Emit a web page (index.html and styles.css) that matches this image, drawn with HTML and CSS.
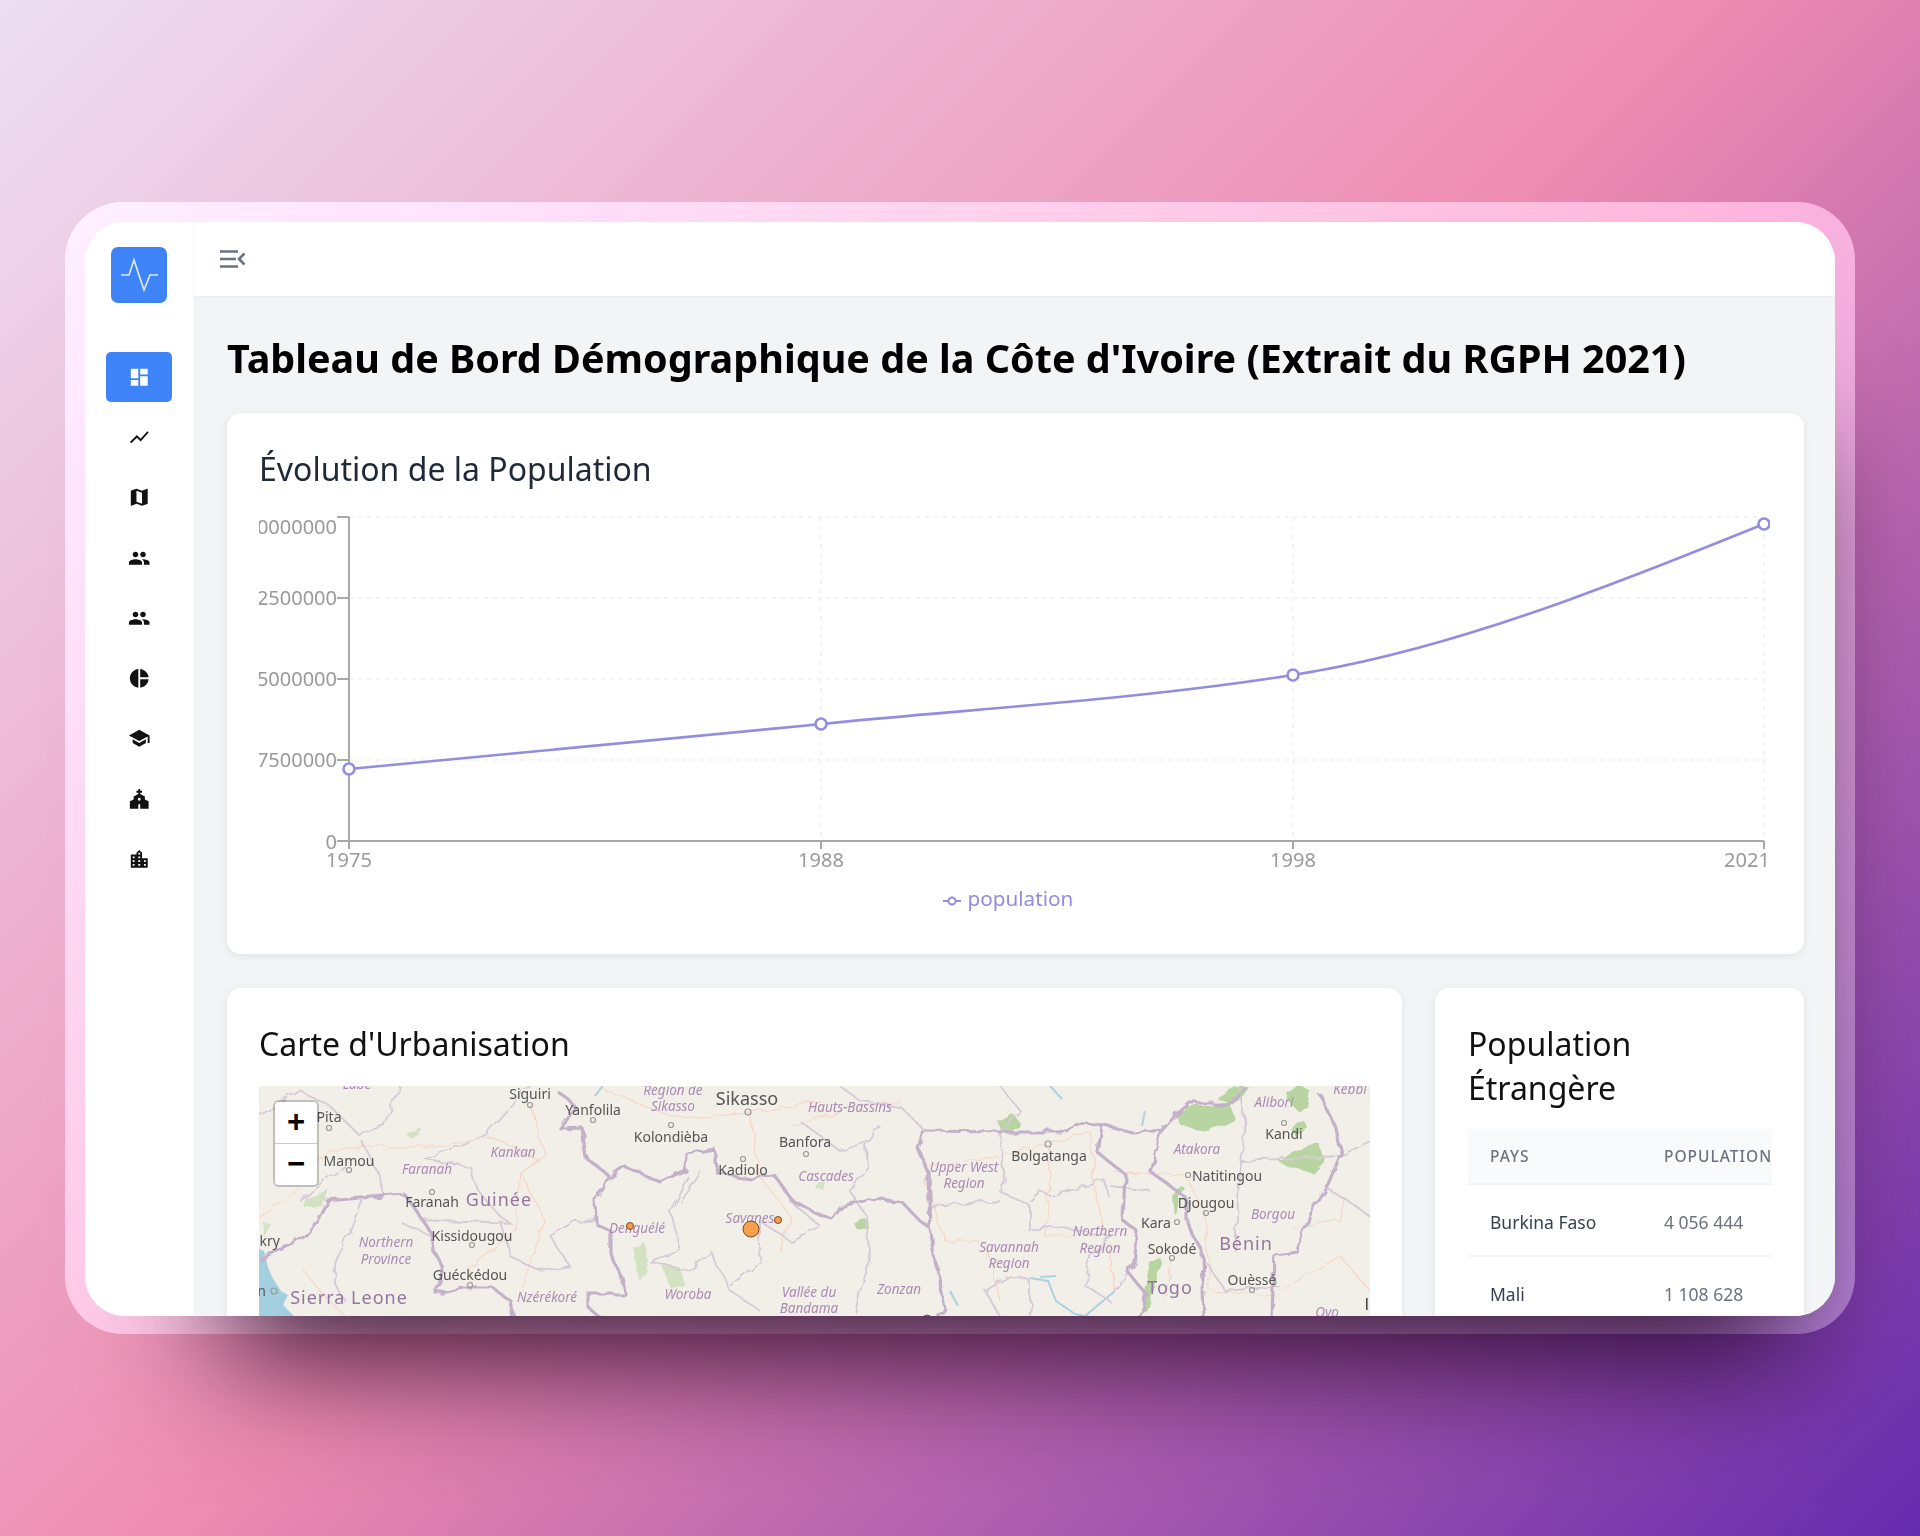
FILE: index.html
```html
<!DOCTYPE html>
<html lang="fr">
<head>
<meta charset="utf-8">
<title>Tableau de Bord Démographique</title>
<link rel="stylesheet" href="styles.css">
</head>
<body>
<div class="frame">
  <div class="app">
    <aside class="sidebar">
      <div class="logo">
        <svg class="logo-icon" viewBox="0 0 56 56"><path d="M10 28h8l5-15 10 30 6-15h8"/></svg>
      </div>
      <nav class="nav">
        <a class="nav-item active"><svg class="icon" viewBox="0 0 24 24"><path d="M3 13h8V3H3v10zm0 8h8v-6H3v6zm10 0h8V11h-8v10zm0-18v6h8V3h-8z"/></svg></a>
        <a class="nav-item"><svg class="icon" viewBox="0 0 24 24"><path d="M3.5 18.49l6-6.01 4 4L22 6.92l-1.41-1.41-7.09 7.97-4-4L2 16.99z"/></svg></a>
        <a class="nav-item"><svg class="icon" viewBox="0 0 24 24"><path d="M20.5 3l-.16.03L15 5.1 9 3 3.36 4.9c-.21.07-.36.25-.36.48V20.5c0 .28.22.5.5.5l.16-.03L9 18.9l6 2.1 5.64-1.9c.21-.07.36-.25.36-.48V3.5c0-.28-.22-.5-.5-.5zM15 19l-6-2.11V5l6 2.11V19z"/></svg></a>
        <a class="nav-item"><svg class="icon" viewBox="0 0 24 24"><path d="M16 11c1.66 0 2.99-1.34 2.99-3S17.66 5 16 5c-1.66 0-3 1.34-3 3s1.34 3 3 3zm-8 0c1.66 0 2.99-1.34 2.99-3S9.66 5 8 5C6.34 5 5 6.34 5 8s1.34 3 3 3zm0 2c-2.33 0-7 1.17-7 3.5V19h14v-2.5c0-2.33-4.67-3.5-7-3.5zm8 0c-.29 0-.62.02-.97.05 1.16.84 1.97 1.97 1.97 3.45V19h6v-2.5c0-2.33-4.67-3.5-7-3.5z"/></svg></a>
        <a class="nav-item"><svg class="icon" viewBox="0 0 24 24"><path d="M16 11c1.66 0 2.99-1.34 2.99-3S17.66 5 16 5c-1.66 0-3 1.34-3 3s1.34 3 3 3zm-8 0c1.66 0 2.99-1.34 2.99-3S9.66 5 8 5C6.34 5 5 6.34 5 8s1.34 3 3 3zm0 2c-2.33 0-7 1.17-7 3.5V19h14v-2.5c0-2.33-4.67-3.5-7-3.5zm8 0c-.29 0-.62.02-.97.05 1.16.84 1.97 1.97 1.97 3.45V19h6v-2.5c0-2.33-4.67-3.5-7-3.5z"/></svg></a>
        <a class="nav-item"><svg class="icon" viewBox="0 0 24 24"><path d="M11 2v20c-5.07-.5-9-4.79-9-10s3.93-9.5 9-10zm2.03 0v8.99H22c-.47-4.74-4.24-8.52-8.97-8.99zm0 11.01V22c4.74-.47 8.5-4.25 8.97-8.99h-8.97z"/></svg></a>
        <a class="nav-item"><svg class="icon" viewBox="0 0 24 24"><path d="M5 13.18v4L12 21l7-3.82v-4L12 17l-7-3.82zM12 3L1 9l11 6 9-4.91V17h2V9L12 3z"/></svg></a>
        <a class="nav-item"><svg class="icon" viewBox="0 0 24 24"><path d="M18 12.22V9l-5-2.5V5h2V3h-2V1h-2v2H9v2h2v1.5L6 9v3.22L2 14v8h9v-4c0-.55.45-1 1-1s1 .45 1 1v4h9v-8l-4-1.78zM12 13.5c-.83 0-1.5-.67-1.5-1.5s.67-1.5 1.5-1.5 1.5.67 1.5 1.5-.67 1.5-1.5 1.5z"/></svg></a>
        <a class="nav-item"><svg class="icon" viewBox="0 0 24 24"><path d="M15 11V5l-3-3-3 3v2H3v14h18V11h-6zm-8 8H5v-2h2v2zm0-4H5v-2h2v2zm0-4H5V9h2v2zm6 8h-2v-2h2v2zm0-4h-2v-2h2v2zm0-4h-2V9h2v2zm0-4h-2V5h2v2zm6 12h-2v-2h2v2zm0-4h-2v-2h2v2z"/></svg></a>
      </nav>
    </aside>
    <div class="main">
      <header class="topbar">
        <svg class="menu-icon" viewBox="0 0 25 18"><path d="M0 1.5h18M0 9h16M0 16.5h18M24.5 3.5L19 9l5.5 5.5"/></svg>
      </header>
      <main class="content">
        <h1 class="page-title">Tableau de Bord Démographique de la Côte d'Ivoire (Extrait du RGPH 2021)</h1>
        <section class="card">
          <h2 class="card-title slate">Évolution de la Population</h2>
          <svg class="chart" viewBox="259 504 1511 417">
            <g class="grid">
              <path d="M349 517H1764M349 598H1764M349 679H1764M349 760H1764M821 517V841M1293 517V841M1764 517V841"/>
            </g>
            <g class="axis">
              <path d="M349 517V841M337 517H349M337 598H349M337 679H349M337 760H349M337 841H349"/>
              <path d="M349 841H1764M349 841V849M821 841V849M1293 841V849M1764 841V849"/>
            </g>
            <g class="tick-y">
              <text x="337" y="534">30000000</text>
              <text x="337" y="605">22500000</text>
              <text x="337" y="686">15000000</text>
              <text x="337" y="767">7500000</text>
              <text x="337" y="849">0</text>
            </g>
            <g class="tick-x">
              <text x="349" y="867">1975</text>
              <text x="821" y="867">1988</text>
              <text x="1293" y="867">1998</text>
              <text x="1747" y="867">2021</text>
            </g>
            <path class="line" d="M349 769C506.3 754.3 663.7 739.6 821 724C978.3 708.4 1135.7 699.7 1293 675C1450 650.4 1607 587.2 1764 524"/>
            <circle class="dot" cx="349" cy="769" r="5.5"/>
            <circle class="dot" cx="821" cy="724" r="5.5"/>
            <circle class="dot" cx="1293" cy="675" r="5.5"/>
            <circle class="dot" cx="1764" cy="524" r="5.5"/>
            <path class="line thin" d="M943 901H961"/>
            <circle class="dot small" cx="952" cy="901" r="3.5"/>
            <text class="legend" x="967.5" y="906">population</text>
          </svg>
        </section>
        <div class="row">
          <section class="card">
            <h2 class="card-title">Carte d'Urbanisation</h2>
            <div class="map">
              <svg class="map-svg" viewBox="259 1085 1111 400">
                <defs>
                  <filter id="wiggle" x="-5%" y="-5%" width="110%" height="110%">
                    <feTurbulence type="fractalNoise" baseFrequency="0.07" numOctaves="2" seed="4"/>
                    <feDisplacementMap in="SourceGraphic" scale="9"/>
                  </filter>
                  <filter id="blob" x="-5%" y="-5%" width="110%" height="110%">
                    <feTurbulence type="fractalNoise" baseFrequency="0.05" numOctaves="2" seed="9"/>
                    <feDisplacementMap in="SourceGraphic" scale="10"/>
                  </filter>
                </defs>
                <path class="water" d="M259 1248L264 1250L268 1266L272 1276L281 1290L288 1294L283 1304L297 1318L298 1330H259Z"/>
                <g class="forest" filter="url(#blob)">
                  <path d="M1176 1112L1194 1103L1230 1103L1236 1118L1216 1128L1196 1130L1180 1124Z"/>
                  <path d="M1285 1090L1302 1086L1312 1092L1309 1108L1298 1110L1288 1100Z"/>
                  <path d="M1278 1160L1294 1148L1320 1143L1325 1158L1312 1172L1290 1166Z"/>
                  <path d="M1290 1127L1304 1120L1310 1128L1296 1136Z"/>
                  <path d="M998 1120L1012 1112L1022 1124L1020 1130L1000 1130Z"/>
                  <path d="M1142 1310L1144 1290L1150 1262L1160 1256L1163 1264L1152 1290L1146 1312Z"/>
                  <path d="M1170 1195L1180 1184L1184 1186L1172 1212Z"/>
                  <path d="M1216 1098L1240 1085L1248 1085L1235 1105Z"/>
                  <path d="M852 1220L868 1218L869 1228L855 1227Z"/>
                  <path class="soft" d="M632 1245L645 1242L648 1270L640 1280ZM664 1265L682 1268L684 1284L670 1286Z"/>
                  <path class="soft" d="M818 1182L826 1182L824 1190L816 1188ZM1205 1292L1210 1292L1208 1300Z"/>
                  <path class="soft" d="M305 1198L330 1188L322 1205L306 1208ZM405 1132L422 1124L412 1138ZM262 1220L272 1225L264 1236Z"/>
                </g>
                <g class="road" filter="url(#wiggle)">
                  <path d="M259 1215L290 1195L325 1150L380 1145L440 1145L490 1135L540 1160L520 1170L515 1230L470 1265L470 1290"/>
                  <path d="M530 1104L545 1155L520 1170L545 1220L520 1290M300 1265L320 1290L345 1315"/>
                  <path d="M600 1087L680 1118L750 1112L760 1175L790 1215L780 1250M750 1112L820 1100"/>
                  <path d="M790 1125L860 1105L900 1100M930 1165L1000 1155L1048 1143L1090 1130L1095 1190L1110 1250L1115 1290"/>
                  <path d="M925 1180L945 1240L985 1240L1000 1300M1050 1145L1045 1235L1095 1235"/>
                  <path d="M1110 1170L1185 1175L1205 1212L1210 1290L1275 1295M1172 1257L1165 1300M1290 1225L1340 1220L1345 1200"/>
                  <path d="M1280 1290L1340 1255L1370 1290"/>
                </g>
                <g class="river">
                  <path d="M1030 1277L1048 1280L1056 1300L1075 1313L1090 1316M1040 1276L1056 1275M1085 1315L1115 1290"/>
                  <path d="M950 1290L958 1305M1145 1110L1142 1125M1050 1085L1062 1098M595 1095L605 1082"/>
                </g>
                <g class="admin" filter="url(#wiggle)">
                  <path d="M259 1115L300 1090L330 1105L360 1135L385 1125L400 1085M362 1140L380 1175L385 1195M300 1200L345 1165M530 1085L490 1130L470 1140L425 1158L470 1165L478 1190L500 1215L510 1222L420 1218"/>
                  <path d="M362 1197L350 1230L335 1255L333 1280L345 1300M430 1235L400 1220M500 1220L510 1255L540 1270L570 1265L550 1235L575 1220L595 1218"/>
                  <path d="M688 1175L670 1210L680 1250L650 1260L690 1270L710 1250L730 1290L760 1310M700 1170L680 1200M730 1285L760 1260L760 1220L790 1240L820 1225L790 1200"/>
                  <path d="M840 1085L860 1100L900 1105L925 1130M880 1125L866 1145L868 1165L850 1190L866 1215L870 1260L860 1290L855 1312"/>
                  <path d="M800 1120L840 1150L870 1140"/>
                  <path d="M1000 1085L1020 1110L1000 1131L1005 1180L1000 1190L1030 1205L1030 1230L1050 1225L1110 1235L1090 1255L1085 1285L1110 1300M930 1205L1000 1200M1030 1200L1040 1190L1050 1195L1105 1180L1108 1195M1110 1185L1150 1190"/>
                  <path d="M1000 1315L985 1290L1010 1275L1030 1280L1030 1315M1115 1290L1127 1270"/>
                  <path d="M1240 1087L1245 1135L1240 1160L1238 1200L1235 1250M1240 1160L1340 1155L1370 1140M1325 1185L1370 1215M1205 1260L1225 1290L1280 1285"/>
                </g>
                <g class="border" filter="url(#wiggle)">
                  <path d="M259 1258L293 1243L305 1235L317 1220L327 1200L361 1197L404 1193L421 1217L432 1233L434 1250L443 1267L437 1293L464 1287L493 1287L511 1300L514 1318"/>
                  <path d="M557 1090L568 1098L575 1106L561 1128L582 1127L586 1157L607 1173L604 1187L595 1197L596 1223L611 1230L611 1253L621 1277L625 1293L589 1293L589 1307L602 1318"/>
                  <path d="M607 1177L625 1165L643 1173L661 1182L686 1170L687 1153L714 1148L718 1173L750 1177L775 1175L793 1200L800 1203L815 1212L832 1218L842 1205L876 1197L903 1202L920 1220L930 1227L934 1250L941 1287L945 1308L938 1316"/>
                  <path d="M924 1130L999 1131L1060 1131L1085 1120L1133 1132L1162 1129L1175 1115L1190 1102L1232 1102L1246 1087"/>
                  <path d="M924 1130L919 1150L928 1170L930 1227"/>
                  <path d="M1102 1125L1098 1152L1125 1173L1123 1220L1137 1230L1133 1260L1127 1270L1146 1293L1139 1318"/>
                  <path d="M1162 1129L1150 1170L1186 1197L1186 1220L1202 1250L1204 1318"/>
                  <path d="M1320 1093L1336 1127L1341 1153L1328 1183L1309 1213L1297 1250L1274 1253L1272 1318"/>
                </g>
                <g class="place">
                  <circle cx="329" cy="1127" r="2.5"/><circle cx="349" cy="1169" r="2.5"/><circle cx="530" cy="1104" r="2.5"/><circle cx="593" cy="1119" r="2.5"/><circle cx="748" cy="1111" r="3"/><circle cx="671" cy="1124" r="2.5"/><circle cx="806" cy="1153" r="2.5"/><circle cx="743" cy="1158" r="2.5"/><circle cx="432" cy="1191" r="2.5"/><circle cx="472" cy="1244" r="2.5"/><circle cx="470" cy="1284" r="2.5"/><circle cx="274" cy="1290" r="3"/><circle cx="1048" cy="1143" r="3"/><circle cx="1284" cy="1122" r="2.5"/><circle cx="1188" cy="1174" r="2.5"/><circle cx="1206" cy="1212" r="2.5"/><circle cx="1177" cy="1221" r="2.5"/><circle cx="1172" cy="1257" r="2.5"/><circle cx="1252" cy="1289" r="2.5"/>
                </g>
                <g class="region">
                  <text x="357" y="1088">Labé</text><text x="673" y="1094">Région de</text><text x="673" y="1110">Sikasso</text><text x="513" y="1156">Kankan</text><text x="427" y="1173">Faranah</text><text x="386" y="1246">Northern</text><text x="386" y="1263">Province</text><text x="547" y="1301">Nzérékoré</text><text x="637" y="1232">Denguélé</text><text x="688" y="1298">Woroba</text><text x="750" y="1222">Savanes</text><text x="826" y="1180">Cascades</text><text x="850" y="1111">Hauts-Bassins</text><text x="964" y="1171">Upper West</text><text x="964" y="1187">Region</text><text x="1197" y="1153">Atakora</text><text x="1274" y="1106">Alibori</text><text x="1350" y="1093">Kebbi</text><text x="1273" y="1218">Borgou</text><text x="1100" y="1235">Northern</text><text x="1100" y="1252">Region</text><text x="1009" y="1251">Savannah</text><text x="1009" y="1267">Region</text><text x="899" y="1293">Zonzan</text><text x="809" y="1296">Vallée du</text><text x="809" y="1312">Bandama</text><text x="1327" y="1316">Oyo</text>
                </g>
                <g class="city">
                  <text x="329" y="1121">Pita</text><text x="349" y="1165">Mamou</text><text x="530" y="1098">Siguiri</text><text x="593" y="1114">Yanfolila</text><text x="671" y="1141">Kolondièba</text><text x="805" y="1146">Banfora</text><text x="743" y="1174">Kadiolo</text><text x="432" y="1206">Faranah</text><text x="472" y="1240">Kissidougou</text><text x="470" y="1279">Guéckédou</text><text x="1049" y="1160">Bolgatanga</text><text x="1284" y="1138">Kandi</text><text x="1227" y="1180">Natitingou</text><text x="1206" y="1207">Djougou</text><text x="1156" y="1227">Kara</text><text x="1172" y="1253">Sokodé</text><text x="1252" y="1284">Ouèssé</text>
                  <text class="big" x="747" y="1104">Sikasso</text>
                  <text class="end" x="280" y="1245">Conakry</text><text class="end" x="266" y="1295">Freetown</text>
                </g>
                <g class="country">
                  <text x="499" y="1205">Guinée</text><text x="349" y="1303">Sierra Leone</text><text x="1246" y="1249">Bénin</text><text x="1170" y="1293">Togo</text>
                </g>
                <g class="marker">
                  <circle cx="751" cy="1228" r="8"/><circle cx="778" cy="1219" r="3.5"/><circle cx="630" cy="1225" r="3.5"/><circle cx="927" cy="1318" r="4"/>
                </g>
              </svg>
              <div class="zoom-control">
                <button class="zoom-btn">+</button>
                <button class="zoom-btn">−</button>
              </div>
              <span class="attrib">l</span>
            </div>
          </section>
          <section class="card side">
            <h2 class="card-title tall">Population Étrangère</h2>
            <div class="table-wrap">
              <table class="table">
                <thead><tr><th>Pays</th><th>Population</th></tr></thead>
                <tbody>
                  <tr><td class="name">Burkina Faso</td><td>4 056 444</td></tr>
                  <tr><td class="name">Mali</td><td>1 108 628</td></tr>
                  <tr><td class="name">Guinée</td><td>305 000</td></tr>
                </tbody>
              </table>
            </div>
          </section>
        </div>
      </main>
    </div>
  </div>
</div>
</body>
</html>
```
FILE: styles.css
```css
* { box-sizing: border-box; }
html, body { margin: 0; height: 100%; }
body {
  height: 1536px;
  display: flex;
  align-items: center;
  justify-content: center;
  background: linear-gradient(135deg, #ecdff3 0%, #ee8bb0 50%, #652cae 100%);
  font-family: "Noto Sans", "Open Sans", sans-serif;
  overflow: hidden;
}
.frame {
  width: 1790px;
  height: 1132px;
  padding: 20px 20px 18px;
  border-radius: 58px;
  background: rgba(255, 240, 255, 0.39);
  -webkit-backdrop-filter: brightness(1.15);
  backdrop-filter: brightness(1.15);
}
.app {
  display: flex;
  width: 100%;
  height: 100%;
  border-radius: 40px;
  background: #fff;
  box-shadow: 50px 130px 120px -90px rgba(30, 0, 30, 0.9);
  overflow: hidden;
  filter: blur(.45px);
}
.sidebar {
  flex: 0 0 109px;
  display: flex;
  flex-direction: column;
  align-items: center;
  padding-top: 25px;
  background: #fff;
  border-right: 1px solid #f6f7f8;
}
.logo {
  width: 56px;
  height: 56px;
  border-radius: 7px;
  background: #3f83f8;
}
.logo-icon { display: block; width: 56px; height: 56px; fill: none; stroke: #dbe7fb; stroke-width: 1.7; }
.nav { display: flex; flex-direction: column; gap: 10.25px; margin-top: 49px; }
.nav-item { display: flex; align-items: center; justify-content: center; width: 66px; height: 50px; border-radius: 5px; color: #111; }
.nav-item.active { background: #3f83f8; color: #fff; }
.icon { width: 22.5px; height: 22.5px; fill: currentColor; }
.main { flex: 1; min-width: 0; display: flex; flex-direction: column; background: #f3f4f6; }
.topbar {
  flex: 0 0 75px;
  display: flex;
  align-items: flex-start;
  padding: 28px 26px;
  background: #fff;
  border-bottom: 1px solid #ebedf0;
}
.menu-icon { width: 25px; height: 18px; fill: none; stroke: #6b7280; stroke-width: 2.6; }
.content { flex: 1; min-height: 0; overflow: hidden; padding: 36px 31px 0 33px; }
.page-title { margin: 0 0 30px; font-size: 39.5px; line-height: 50px; font-weight: 700; color: #000; white-space: nowrap; }
.card { padding: 33px 32px; border-radius: 14px; background: #fff; box-shadow: 0 2px 8px rgba(0, 0, 0, .08); }
.card.side { padding-left: 33px; }
.card-title { margin: 0; padding-top: 1px; font-size: 32px; line-height: 44px; font-weight: 400; color: #111; }
.card-title.tall { line-height: 43.5px; }
.card-title.slate { color: #1f2937; }
.chart { display: block; width: 1511px; height: 417px; margin-top: 13px; }
.grid path { fill: none; stroke: #f0f0f0; stroke-width: 1.5; stroke-dasharray: 4 5; }
.axis path { fill: none; stroke: #a8a8a8; stroke-width: 2; }
.tick-y text { font-size: 20px; fill: #9a9a9a; text-anchor: end; }
.tick-x text { font-size: 20px; fill: #9a9a9a; text-anchor: middle; }
.line { fill: none; stroke: #928dde; stroke-width: 2.6; }
.line.thin { stroke-width: 2; }
.dot { fill: #fff; stroke: #928dde; stroke-width: 2.6; }
.dot.small { stroke-width: 2; }
.legend { font-size: 20.7px; fill: #928dde; }
.row { display: grid; grid-template-columns: 1175px 369px; gap: 33px; margin-top: 34px; }
.map { position: relative; height: 400px; margin-top: 20px; background: #f2efe9; overflow: hidden; }
.map-svg { display: block; width: 1111px; height: 400px; filter: blur(.5px); }
.water { fill: #a3cfe0; }
.forest path { fill: #b8d4a0; }
.forest path.soft { fill: #d2e2c2; }
.road path { fill: none; stroke: #f5d6c6; stroke-width: 1.2; }
.river path { fill: none; stroke: #aad3df; stroke-width: 2; }
.admin path { fill: none; stroke: #d6cad6; stroke-width: 1.8; }
.border path { fill: none; stroke: #c3b1c9; stroke-width: 3.2; stroke-linejoin: round; }
.place circle { fill: none; stroke: #999; stroke-width: 1.2; }
.region text { font-size: 13.5px; font-style: italic; fill: #a98bb3; text-anchor: middle; }
.city text { font-size: 14px; fill: #555; text-anchor: middle; }
.city text.big { font-size: 18px; }
.city text.end { text-anchor: end; }
.country text { font-size: 18px; letter-spacing: 1px; fill: #93769e; text-anchor: middle; }
.marker circle { fill: #f6a04d; stroke: #7a4a1c; stroke-width: 1; }
.zoom-control {
  position: absolute;
  left: 16px;
  top: 16px;
  width: 42px;
  border-radius: 4px;
  overflow: hidden;
  box-shadow: 0 0 0 2px rgba(0, 0, 0, .2);
}
.zoom-btn {
  display: block;
  width: 100%;
  height: 41.5px;
  padding: 0;
  border: 0;
  border-bottom: 1px solid #ccc;
  background: #fff;
  font-family: "Liberation Sans", sans-serif;
  font-size: 31px;
  font-weight: 700;
  line-height: 40px;
  color: #000;
}
.zoom-btn:last-child { border-bottom: 0; }
.attrib { position: absolute; right: 1px; top: 208px; font-size: 16px; line-height: 20px; color: #333; }
.table-wrap { margin-top: 20px; overflow: hidden; }
.table { width: 420px; border-collapse: collapse; table-layout: fixed; }
.table th {
  height: 55px;
  padding: 0 0 0 22px;
  background: #f9fafb;
  border-bottom: 2px solid #f1f2f4;
  font-size: 15.5px;
  font-weight: 500;
  letter-spacing: 1px;
  color: #6b7280;
  text-align: left;
  text-transform: uppercase;
}
.table th:first-child { width: 174px; }
.table td {
  height: 72px;
  padding: 4px 0 0 22px;
  border-bottom: 2px solid #f3f4f6;
  font-size: 17.5px;
  color: #6b7280;
}
.table td.name { color: #374151; }
```
